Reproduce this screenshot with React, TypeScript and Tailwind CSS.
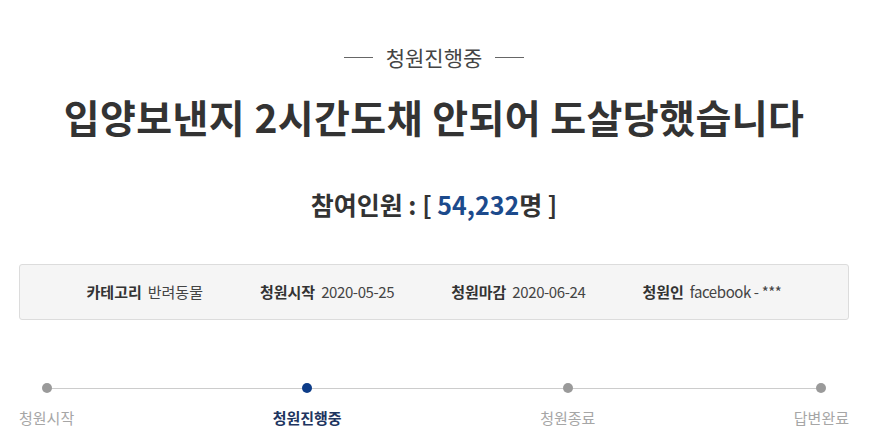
import React from "react";

const font = { fontFamily: '"Noto Sans CJK KR", "Noto Sans", sans-serif' };

const steps = [
  { label: "청원시작", active: false },
  { label: "청원진행중", active: true },
  { label: "청원종료", active: false },
  { label: "답변완료", active: false },
];

const info = [
  { k: "카테고리", v: "반려동물", t: "tracking-[0px]" },
  { k: "청원시작", v: "2020-05-25", t: "tracking-[-0.4px]" },
  { k: "청원마감", v: "2020-06-24", t: "tracking-[-0.4px]" },
  { k: "청원인", v: "facebook - ***", t: "tracking-[-0.4px]" },
];

export default function App() {
  return (
    <div className="w-[883px] h-[446px] bg-white overflow-hidden" style={font}>
      <div className="ml-[19px] w-[830px] flex flex-col items-center">
        <div className="mt-[42px] flex items-center gap-[13px]">
          <div className="w-[29px] h-px bg-[#666]" />
          <div className="text-[21px] leading-[30px] text-[#444]">청원진행중</div>
          <div className="w-[29px] h-px bg-[#666]" />
        </div>
        <h1 className="mt-[19px] text-[39px] leading-[50px] font-bold text-[#333] tracking-[0.4px] whitespace-nowrap">
          입양보낸지 2시간도채 안되어 도살당했습니다
        </h1>
        <div className="mt-[46px] text-[25px] leading-[34px] font-bold text-[#333]">
          참여인원 : [ <span className="text-[#1c4a8c]">54,232</span>명 ]
        </div>
        <div className="mt-[43px] w-[830px] h-[56px] bg-[#f5f5f5] border border-[#dcdcdc] rounded-[3px] flex items-center justify-center gap-[57px]">
          {info.map((it) => (
            <div key={it.k} className="flex items-center gap-[6px] text-[15px] leading-[20px]">
              <span className="font-bold text-[#333]">{it.k}</span>
              <span className={"text-[#444] " + it.t}>{it.v}</span>
            </div>
          ))}
        </div>
        <div className="mt-[63px] w-[830px] relative flex justify-between">
          <div className="absolute left-[26px] right-[28px] top-[5px] h-px bg-[#cccccc]" />
          {steps.map((s) => (
            <div key={s.label} className="relative flex flex-col items-center">
              <div
                className={
                  s.active
                    ? "w-[10px] h-[10px] rounded-full bg-[#0d3c88]"
                    : "w-[10px] h-[10px] rounded-full bg-[#9a9a9a]"
                }
              />
              <div
                className={
                  s.active
                    ? "mt-[14px] text-[15px] leading-[22px] font-bold text-[#1e3560]"
                    : "mt-[14px] text-[15px] leading-[22px] text-[#a6a6a6]"
                }
              >
                {s.label}
              </div>
            </div>
          ))}
        </div>
      </div>
    </div>
  );
}
